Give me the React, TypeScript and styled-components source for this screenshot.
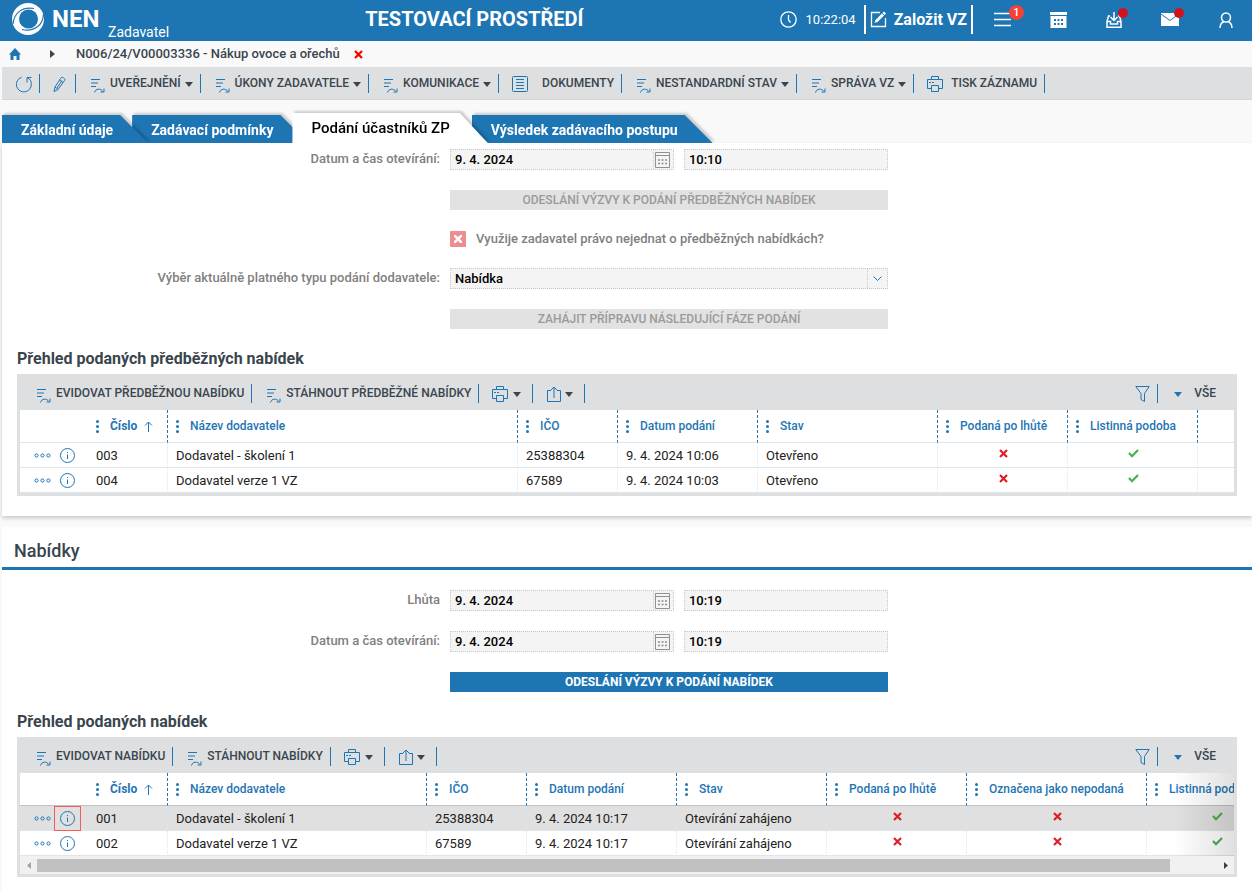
import React from "react";
import styled, { createGlobalStyle } from "styled-components";

const BLUE = "#1e75b4";
const INK = "#3a454d";
const BAR = "#dedfe1";

const GlobalStyle = createGlobalStyle`
  *, *::before, *::after { box-sizing: border-box; }
  body {
    margin: 0;
    background: #f9f9f9;
    color: ${INK};
    font: 13px/20px Roboto, "Liberation Sans", sans-serif;
  }
  button, input, select { font: inherit; color: inherit; margin: 0; border-radius: 0; }
  button { background: none; border: 0; padding: 0; cursor: pointer; }
  a { color: inherit; text-decoration: none; }
  h1, h2, h3, p { margin: 0; }
  svg { display: block; flex: none; }
`;

/* ---------- icons ---------- */

const Line = styled.svg`
  fill: none;
  stroke: ${BLUE};
  stroke-width: 1;
`;

const Logo = () => (
  <svg width="32" height="32" viewBox="0 0 32 32" aria-hidden="true">
    <circle cx="16" cy="16" r="16" fill="#fff" />
    <circle cx="16.500" cy="16" r="9.500" fill={BLUE} />
    <path d="M1 21C2 10 10 3.500 22 5.500M31.500 11C31 22 23 29 10 26.500" fill="none" stroke={BLUE} strokeWidth="1.200" />
  </svg>
);

const FlowSvg = styled(Line)`
  && { margin-top: 5px; }
`;
const FlowIcon = () => (
  <FlowSvg width="14" height="14" viewBox="0 0 14 14" aria-hidden="true">
    <path d="M0 .5H9M0 4H7M0 7.500H5M3.500 13.500C4.500 9.500 9.500 9 12 12.500" />
    <path d="M13 9.500V13H9.500" />
  </FlowSvg>
);

const RefreshIcon = () => (
  <Line width="16" height="17" viewBox="0 0 16 17" aria-hidden="true">
    <path d="M5.500 1.300A7.500 7.500 0 1 0 15.300 7.500" />
    <path d="M15.500 1.500H11V6.500M11 1.500C14 3 15.300 5 15.300 7.500" />
  </Line>
);

const PencilIcon = () => (
  <Line width="15" height="17" viewBox="0 0 15 17" aria-hidden="true">
    <path d="M1 15.500L2 11 8 1.800C9 .3 12.800 2.500 11.500 4.500L5 13.500ZM2 11L5 13.500M6.500 4L10 6.500M9 4.500L4 12" />
  </Line>
);

const DocIcon = () => (
  <Line width="17" height="17" viewBox="0 0 17 17" aria-hidden="true">
    <rect x=".5" y=".5" width="15" height="15" rx="1" />
    <path d="M4 3.500H12M4 6.500H12M4 9.500H12M4 12.500H12" />
  </Line>
);

const PrinterIcon = () => (
  <Line width="17" height="17" viewBox="0 0 17 17" aria-hidden="true">
    <path d="M4.500 3.500V.5H11.500V3.500M4.500 12.500H.5V3.500H15.500V12.500H11.500" />
    <path d="M4.500 9.500H11.500V15.500H4.500ZM2 6.500H4M5 6.500H7" />
  </Line>
);

const ExportIcon = () => (
  <Line width="14" height="17" viewBox="0 0 14 17" aria-hidden="true">
    <path d="M4 4.500H.5V15.500H13.500V4.500H10M7 12V1M3.500 4.500L7 1L10.500 4.500" />
  </Line>
);

const FunnelIcon = () => (
  <Line width="15" height="17" viewBox="0 0 15 17" aria-hidden="true">
    <path d="M.8 .5H14.200L9.500 7.500V15.500L6 13.500V7.500Z" />
  </Line>
);

const CaretSvg = styled.svg<{ $blue?: boolean }>`
  fill: ${(p) => (p.$blue ? BLUE : INK)};
`;
const Caret = ({ blue }: { blue?: boolean }) => (
  <CaretSvg $blue={blue} width="8" height="5" viewBox="0 0 8 5" aria-hidden="true">
    <path d="M0 0H8L4 5Z" />
  </CaretSvg>
);

const HomeIcon = () => (
  <svg width="12" height="12" viewBox="0 0 12 12" fill={BLUE} aria-hidden="true">
    <path d="M6 0L12 6.500H10.500V12H7.500V8H4.500V12H1.500V6.500H0Z" />
  </svg>
);

const Cross = ({ color = "#dd1f26" }: { color?: string }) => (
  <svg width="9" height="9" viewBox="0 0 9 9" stroke={color} strokeWidth="2.200" role="img" aria-label="Ne">
    <path d="M1 1L8 8M8 1L1 8" />
  </svg>
);

const Tick = () => (
  <svg width="11" height="9" viewBox="0 0 11 9" fill="none" stroke="#4cae50" strokeWidth="2.200" role="img" aria-label="Ano">
    <path d="M1 4L4 7.200L10 1" />
  </svg>
);

const DotsIcon = () => (
  <Line width="17" height="5" viewBox="0 0 17 5" aria-hidden="true">
    <circle cx="2.500" cy="2.500" r="1.600" />
    <circle cx="8.500" cy="2.500" r="1.600" />
    <circle cx="14.500" cy="2.500" r="1.600" />
  </Line>
);

const InfoIcon = () => (
  <Line width="15" height="15" viewBox="0 0 15 15" aria-hidden="true">
    <circle cx="7.500" cy="7.500" r="7" />
    <path d="M7.500 6.500V11M7.500 4V5" />
  </Line>
);

const GripIcon = () => (
  <svg width="3" height="13" viewBox="0 0 3 13" fill={BLUE} aria-hidden="true">
    <circle cx="1.500" cy="1.500" r="1.500" />
    <circle cx="1.500" cy="6.500" r="1.500" />
    <circle cx="1.500" cy="11.500" r="1.500" />
  </svg>
);

const SortIcon = () => (
  <Line width="9" height="11" viewBox="0 0 9 11" aria-hidden="true">
    <path d="M4.500 11V1M1 4.500L4.500 1L8 4.500" />
  </Line>
);

const CalendarIcon = () => (
  <svg width="15" height="16" viewBox="0 0 15 16" fill="none" stroke="#8f8f8f" aria-hidden="true">
    <path d="M.5 .5H14.500V15.500H.5ZM.5 3.500H14.500" />
    <path d="M3 8H12M3 11.500H12" strokeWidth="1.500" strokeDasharray="2 1.500" />
  </svg>
);

/* ---------- header ---------- */

const Header = styled.header`
  display: flex;
  align-items: flex-start;
  height: 41px;
  padding: 0 17px 0 12px;
  background: ${BLUE};
  color: #fff;
`;
const Brand = styled.a`
  display: flex;
  align-items: center;
  height: 38px;
`;
const BrandName = styled.span`
  min-width: 56px;
  margin-left: 8px;
  font-size: 24px;
  line-height: 38px;
  font-weight: 700;
`;
const BrandRole = styled.span`
  align-self: flex-end;
  font-size: 14px;
  line-height: 12px;
`;
const EnvName = styled.h1`
  flex: 1;
  font-size: 20px;
  line-height: 38px;
  font-weight: 700;
  text-align: center;
`;
const HeaderTools = styled.div`
  display: flex;
  align-items: center;
  height: 39px;
`;
const Clock = styled.div`
  display: flex;
  align-items: center;
  gap: 9px;
  margin-right: 8px;
`;
const CreateButton = styled.button`
  display: flex;
  align-items: center;
  gap: 7px;
  height: 29px;
  margin-right: 20px;
  padding: 0 4px;
  border: solid #fff;
  border-width: 0 2px;
  font-size: 16px;
  font-weight: 700;
`;
const HeaderIcons = styled.nav`
  display: flex;
  gap: 38px;
`;
const HeaderIcon = styled.button`
  position: relative;
  display: flex;
  align-items: center;
  justify-content: center;
  width: 18px;
  height: 18px;
  svg { fill: none; stroke: #fff; stroke-width: 1.500; }
`;
const Badge = styled.span`
  position: absolute;
  top: -6px;
  right: -13px;
  width: 15px;
  height: 15px;
  border-radius: 50%;
  background: #f44336;
  font-size: 11px;
  line-height: 15px;
  font-weight: 500;
`;
const Dot = styled.span`
  position: absolute;
  top: -3px;
  right: -5px;
  width: 10px;
  height: 10px;
  border-radius: 50%;
  background: #d3131b;
`;

/* ---------- navigation ---------- */

const Crumbs = styled.nav`
  display: flex;
  align-items: center;
  height: 26px;
  padding-left: 9px;
  font-weight: 500;
`;
const CrumbArrow = styled.span`
  width: 0;
  margin: 0 21px 0 29px;
  border: solid transparent;
  border-width: 4px 0 4px 5px;
  border-left-color: ${INK};
`;
const CloseButton = styled.button`
  margin-left: 14px;
`;

const Toolbar = styled.div`
  display: flex;
  align-items: center;
  height: 33px;
  margin-left: 2px;
  background: ${BAR};
  border-bottom: 1px solid #d3d5d7;
`;
const ToolButton = styled.button<{ $gap?: number; $left?: number; $right?: number }>`
  display: flex;
  align-items: center;
  gap: 4px;
  height: 19px;
  padding: 0 ${(p) => p.$right ?? 7}px 0 ${(p) => p.$left ?? 15}px;
  border-right: 1px solid ${BLUE};
  font-size: 12px;
  line-height: 20px;
  font-weight: 500;
  white-space: nowrap;
  > span { margin-left: ${(p) => p.$gap ?? 1}px; }
  > svg { margin-top: 2px; }
`;

const Tabs = styled.div`
  display: flex;
  align-items: flex-end;
  height: 43px;
  padding-left: 2px;
  overflow: hidden;
`;
const Tab = styled.button<{ $active?: boolean; $level: number }>`
  position: relative;
  z-index: ${(p) => p.$level};
  height: ${(p) => (p.$active ? 30 : 28)}px;
  padding: ${(p) => (p.$active ? "0 38px 0 19px" : "2px 35px 0 19px")};
  margin-right: -16px;
  color: ${(p) => (p.$active ? "#000" : "#fff")};
  font-size: ${(p) => (p.$active ? 15 : 14)}px;
  font-weight: ${(p) => (p.$active ? 500 : 700)};
  white-space: nowrap;
  filter: drop-shadow(2px -2px 1px rgba(0, 0, 0, 0.18));
  &::before {
    content: "";
    position: absolute;
    inset: 0;
    z-index: -1;
    background: ${(p) => (p.$active ? "#fff" : BLUE)};
    clip-path: polygon(0 0, calc(100% - 28px) 0, 100% 100%, 0 100%);
  }
`;

/* ---------- form ---------- */

const Panel = styled.section`
  margin-left: 2px;
  background: #fff;
`;
const FirstPanel = styled(Panel)`
  padding: 6px 0 20px;
  margin-bottom: 11px;
  box-shadow: 0 2px 4px rgba(0, 0, 0, 0.2);
`;
const SecondPanel = styled(Panel)`
  padding-bottom: 16px;
`;
const PanelTitle = styled.h2`
  height: 43px;
  margin-bottom: 20px;
  padding: 12px 12px 0;
  border-bottom: 3px solid ${BLUE};
  font-size: 18px;
  line-height: 24px;
  font-weight: 500;
`;
const Form = styled.div`
  display: flex;
  flex-direction: column;
  gap: 20px;
`;
const Row = styled.div`
  display: grid;
  grid-template-columns: 438px minmax(0, 438px);
  column-gap: 10px;
`;
const Label = styled.label`
  color: #808080;
  font-weight: 500;
  line-height: 20px;
  text-align: right;
`;
const Pair = styled.div`
  display: flex;
  gap: 10px;
`;
const Field = styled.div<{ $grow: number }>`
  display: flex;
  flex: ${(p) => p.$grow} 1 0;
  height: 21px;
  border: 1px dotted #c8c8c8;
  background: #f4f4f4;
  color: #000;
`;
const TextInput = styled.input`
  flex: 1;
  min-width: 0;
  padding: 0 4px;
  border: 0;
  background: none;
  font-weight: 500;
`;
const FieldButton = styled.button`
  display: flex;
  align-items: center;
  width: 20px;
  padding-left: 1px;
  border-left: 1px dotted #c8c8c8;
`;
const SelectBox = styled(Field)`
  position: relative;
`;
const Select = styled.select`
  flex: 1;
  appearance: none;
  padding: 0 24px 0 4px;
  border: 0;
  background: none;
  font-weight: 500;
`;
const SelectArrow = styled.span`
  position: absolute;
  inset: 0 0 0 auto;
  display: flex;
  align-items: center;
  justify-content: center;
  width: 20px;
  border-left: 1px dotted #c8c8c8;
  pointer-events: none;
`;
const ActionButton = styled.button<{ $primary?: boolean }>`
  grid-column: 2;
  height: 20px;
  background: ${(p) => (p.$primary ? BLUE : "#e2e2e2")};
  color: ${(p) => (p.$primary ? "#fff" : "#9a9a9a")};
  font-size: 12px;
  font-weight: ${(p) => (p.$primary ? 700 : 500)};
`;
const CheckRow = styled.label`
  grid-column: 2;
  display: flex;
  align-items: center;
  gap: 10px;
  height: 18px;
  color: #808080;
  font-weight: 500;
`;
const CheckWrap = styled.span`
  position: relative;
  width: 16px;
  height: 16px;
  svg { position: absolute; top: 4px; left: 4px; pointer-events: none; }
`;
const CheckBox = styled.input`
  display: block;
  appearance: none;
  margin: 0;
  width: 16px;
  height: 16px;
  border-radius: 1px;
  background: #ee8d90;
`;

/* ---------- grid ---------- */

const GridTitle = styled.h3`
  margin: 18px 15px 3px;
  font-size: 16px;
  line-height: 24px;
  font-weight: 700;
`;
const GridFrame = styled.div`
  margin: 0 15px;
  border: 3px solid ${BAR};
  border-top: 0;
  background: #fff;
`;
const GridBar = styled.div`
  display: flex;
  align-items: center;
  height: 36px;
  padding-top: 2px;
  background: ${BAR};
`;
const Spacer = styled.span`
  flex: 1;
`;
const ViewButton = styled(ToolButton)`
  border: 0;
  gap: 12px;
`;
const Scroller = styled.div`
  position: relative;
  overflow: hidden;
`;
const Fade = styled.div`
  position: absolute;
  inset: 0 0 0 auto;
  width: 60px;
  background: linear-gradient(to right, rgba(0, 0, 0, 0), rgba(0, 0, 0, 0.12));
  pointer-events: none;
`;
const Table = styled.table<{ $width?: number }>`
  width: ${(p) => (p.$width ? `${p.$width}px` : "100%")};
  table-layout: fixed;
  border-collapse: separate;
  border-spacing: 0;
`;
const Col = styled.col<{ $w?: number }>`
  width: ${(p) => (p.$w ? `${p.$w}px` : "auto")};
`;
const Th = styled.th<{ $line?: boolean; $dark?: boolean }>`
  height: 33px;
  padding: 0 0 0 8px;
  border-bottom: 1px solid ${(p) => (p.$dark ? "#bfc1c3" : "#dde6ec")};
  border-right: ${(p) => (p.$line ? `1px dashed ${BLUE}` : "0")};
  color: ${BLUE};
  font-size: 12px;
  font-weight: 500;
  text-align: left;
  white-space: nowrap;
`;
const HeadLabel = styled.span<{ $sorted?: boolean }>`
  display: flex;
  align-items: center;
  gap: 11px;
  font-weight: ${(p) => (p.$sorted ? 700 : 500)};
  svg:last-child:not(:first-child) { margin-left: -4px; }
`;
const Td = styled.td<{ $line?: boolean; $mid?: boolean; $on?: boolean }>`
  height: 25px;
  padding: ${(p) => (p.$mid ? "0 0 0 2px" : "1px 0 0 8px")};
  border-bottom: 1px solid #dde6ec;
  border-right: ${(p) => (p.$line ? "1px dotted #dde6ec" : "0")};
  background: ${(p) => (p.$on ? "#e0e0e0" : "#fff")};
  color: #222;
  line-height: 23px;
  white-space: nowrap;
  > svg { margin: 0 auto 3px; }
`;
const RowTools = styled.span`
  display: flex;
  align-items: center;
  height: 23px;
  padding-left: 6px;
`;
const InfoButton = styled.button<{ $marked?: boolean }>`
  display: flex;
  align-items: center;
  justify-content: center;
  width: 25px;
  height: 23px;
  margin-left: 4px;
  outline: ${(p) => (p.$marked ? "1px solid #f55b5b" : "0")};
`;
const ScrollBar = styled.div`
  display: flex;
  align-items: center;
  height: 18px;
  background: #f1f1f1;
`;
const ScrollTrack = styled.div`
  flex: 1;
`;
const ScrollThumb = styled.div`
  width: 96%;
  height: 13px;
  background: #c1c1c1;
`;
const ScrollArrow = styled.button`
  display: flex;
  align-items: center;
  justify-content: center;
  width: 17px;
  height: 17px;
`;

type Column = { title: string; width?: number; sorted?: boolean };
type Cell = string | boolean;
type GridProps = {
  actions: string[];
  columns: Column[];
  rows: Cell[][];
  width?: number;
  selected?: number;
};

function Grid({ actions, columns, rows, width, selected }: GridProps) {
  return (
    <GridFrame>
      <GridBar>
        {actions.map((a, i) => (
          <ToolButton key={a} $left={i ? 15 : 17}>
            <FlowIcon />
            <span>{a}</span>
          </ToolButton>
        ))}
        <ToolButton $left={13} $right={11} aria-label="Tisk">
          <PrinterIcon />
          <Caret />
        </ToolButton>
        <ToolButton $left={14} $right={11} aria-label="Export">
          <ExportIcon />
          <Caret />
        </ToolButton>
        <Spacer />
        <ToolButton aria-label="Filtr">
          <FunnelIcon />
        </ToolButton>
        <ViewButton $left={16} $right={18}>
          <Caret blue />
          VŠE
        </ViewButton>
      </GridBar>
      <Scroller>
        <Table $width={width}>
          <colgroup>
            <Col $w={68} />
            {columns.map((c) => (
              <Col key={c.title} $w={c.width} />
            ))}
            {!width && <Col />}
          </colgroup>
          <thead>
            <tr>
              <Th $dark={selected === 0} />
              {columns.map((c) => (
                <Th key={c.title} $line $dark={selected === 0} scope="col">
                  <HeadLabel $sorted={c.sorted}>
                    <GripIcon />
                    {c.title}
                    {c.sorted && <SortIcon />}
                  </HeadLabel>
                </Th>
              ))}
              {!width && <Th />}
            </tr>
          </thead>
          <tbody>
            {rows.map((r, i) => (
              <tr key={i}>
                <Td $on={selected === i}>
                  <RowTools>
                    <button aria-label="Akce">
                      <DotsIcon />
                    </button>
                    <InfoButton $marked={selected === i} aria-label="Detail">
                      <InfoIcon />
                    </InfoButton>
                  </RowTools>
                </Td>
                {r.map((v, j) => (
                  <Td key={j} $line $on={selected === i} $mid={typeof v === "boolean"}>
                    {typeof v === "string" ? v : v ? <Tick /> : <Cross />}
                  </Td>
                ))}
                {!width && <Td $on={selected === i} />}
              </tr>
            ))}
          </tbody>
        </Table>
        {width && <Fade />}
      </Scroller>
      {width && (
        <ScrollBar>
          <ScrollArrow aria-label="Posunout vlevo">
            <svg width="4" height="7" viewBox="0 0 4 7" fill="#a3a3a3"><path d="M4 0V7L0 3.500Z" /></svg>
          </ScrollArrow>
          <ScrollTrack>
            <ScrollThumb />
          </ScrollTrack>
          <ScrollArrow aria-label="Posunout vpravo">
            <svg width="4" height="7" viewBox="0 0 4 7" fill="#404040"><path d="M0 0V7L4 3.500Z" /></svg>
          </ScrollArrow>
        </ScrollBar>
      )}
    </GridFrame>
  );
}

function DateRow({ id, label, date, time }: { id: string; label: string; date: string; time: string }) {
  return (
    <Row>
      <Label htmlFor={id}>{label}</Label>
      <Pair>
        <Field $grow={224}>
          <TextInput id={id} defaultValue={date} readOnly />
          <FieldButton aria-label="Kalendář">
            <CalendarIcon />
          </FieldButton>
        </Field>
        <Field $grow={204}>
          <TextInput aria-label={`${label} čas`} defaultValue={time} readOnly />
        </Field>
      </Pair>
    </Row>
  );
}

const Menu = ({ title }: { title: string }) => (
  <ToolButton>
    <FlowIcon />
    <span>{title}</span>
    <Caret />
  </ToolButton>
);

export default function App() {
  return (
    <>
      <GlobalStyle />
      <Header>
        <Brand href="#">
          <Logo />
          <BrandName>NEN</BrandName>
          <BrandRole>Zadavatel</BrandRole>
        </Brand>
        <EnvName>TESTOVACÍ PROSTŘEDÍ</EnvName>
        <HeaderTools>
          <Clock>
            <svg width="17" height="17" viewBox="0 0 17 17" fill="none" stroke="#fff" strokeWidth="1.300" aria-hidden="true">
              <circle cx="8.500" cy="8.500" r="7.700" />
              <path d="M8.500 4V9L10.500 11.500" />
            </svg>
            10:22:04
          </Clock>
          <CreateButton>
            <svg width="17" height="17" viewBox="0 0 17 17" fill="none" stroke="#fff" aria-hidden="true">
              <path d="M10 1.500H1.500V15.500H15.500V7" strokeWidth="1.300" />
              <path d="M6 10.500L13 3.500" strokeWidth="3" />
              <path d="M13.500 3L15 1.500" strokeWidth="3" />
              <path d="M4.500 12L5.500 9.500L7 11Z" fill="#fff" stroke="none" />
            </svg>
            Založit VZ
          </CreateButton>
          <HeaderIcons>
            <HeaderIcon aria-label="Menu">
              <svg width="17" height="15" viewBox="0 0 17 15"><path d="M0 1.500H17M0 7.500H17M0 13.500H17" /></svg>
              <Badge>1</Badge>
            </HeaderIcon>
            <HeaderIcon aria-label="Kalendář">
              <svg width="17" height="16" viewBox="0 0 17 16">
                <path d="M0 1.500H17" strokeWidth="3" />
                <path d="M.5 4H16.500V16H.5Z" fill="#fff" stroke="none" />
                <path d="M4 8H13M4 12H13" stroke={BLUE} strokeWidth="2" strokeDasharray="2 1.500" />
              </svg>
            </HeaderIcon>
            <HeaderIcon aria-label="Doručené">
              <svg width="16" height="16" viewBox="0 0 16 16">
                <path d="M4 4H2.500L1 9.500V15.200H15V9.500L13.500 4H12M1 9.500H4.500V12H11.500V9.500H15M8 0V8M4.500 5L8 8.500L11.500 5" />
              </svg>
              <Dot />
            </HeaderIcon>
            <HeaderIcon aria-label="Zprávy">
              <svg width="18" height="13" viewBox="0 0 18 13">
                <path d="M0 0H18V13H0Z" fill="#fff" stroke="none" />
                <path d="M0 1L9 7.500L18 1" stroke={BLUE} strokeWidth="1" />
              </svg>
              <Dot />
            </HeaderIcon>
            <HeaderIcon aria-label="Uživatel">
              <svg width="14" height="16" viewBox="0 0 14 16">
                <circle cx="7" cy="5.500" r="4.500" />
                <path d="M1 16C1 12.500 2.500 10.500 5 9.500M13 16C13 12.500 11.500 10.500 9 9.500" />
              </svg>
            </HeaderIcon>
          </HeaderIcons>
        </HeaderTools>
      </Header>

      <Crumbs>
        <a href="#" aria-label="Domů">
          <HomeIcon />
        </a>
        <CrumbArrow />
        <a href="#">N006/24/V00003336 - Nákup ovoce a ořechů</a>
        <CloseButton aria-label="Zavřít">
          <Cross color="#f80000" />
        </CloseButton>
      </Crumbs>

      <Toolbar>
        <ToolButton $left={14} aria-label="Obnovit">
          <RefreshIcon />
        </ToolButton>
        <ToolButton $left={13} aria-label="Upravit">
          <PencilIcon />
        </ToolButton>
        <Menu title="UVEŘEJNĚNÍ" />
        <Menu title="ÚKONY ZADAVATELE" />
        <Menu title="KOMUNIKACE" />
        <ToolButton $left={13} $gap={9}>
          <DocIcon />
          <span>DOKUMENTY</span>
        </ToolButton>
        <Menu title="NESTANDARDNÍ STAV" />
        <Menu title="SPRÁVA VZ" />
        <ToolButton $left={13} $gap={3}>
          <PrinterIcon />
          <span>TISK ZÁZNAMU</span>
        </ToolButton>
      </Toolbar>

      <Tabs role="tablist">
        <Tab role="tab" $level={3}>Základní údaje</Tab>
        <Tab role="tab" $level={2}>Zadávací podmínky</Tab>
        <Tab role="tab" $level={4} $active aria-selected>Podání účastníků ZP</Tab>
        <Tab role="tab" $level={1}>Výsledek zadávacího postupu</Tab>
      </Tabs>

      <FirstPanel>
        <Form>
          <DateRow id="open1" label="Datum a čas otevírání:" date="9. 4. 2024" time="10:10" />
          <Row>
            <ActionButton>ODESLÁNÍ VÝZVY K PODÁNÍ PŘEDBĚŽNÝCH NABÍDEK</ActionButton>
          </Row>
          <Row>
            <CheckRow>
              <CheckWrap>
                <CheckBox type="checkbox" />
                <svg width="8" height="8" viewBox="0 0 8 8" stroke="#fff" strokeWidth="2.500">
                  <path d="M0 0L8 8M8 0L0 8" />
                </svg>
              </CheckWrap>
              Využije zadavatel právo nejednat o předběžných nabídkách?
            </CheckRow>
          </Row>
          <Row>
            <Label htmlFor="kind">Výběr aktuálně platného typu podání dodavatele:</Label>
            <SelectBox $grow={1}>
              <Select id="kind">
                <option>Nabídka</option>
              </Select>
              <SelectArrow>
                <Line width="9" height="6" viewBox="0 0 9 6" aria-hidden="true">
                  <path d="M.5 .5L4.500 4.500L8.500 .5" />
                </Line>
              </SelectArrow>
            </SelectBox>
          </Row>
          <Row>
            <ActionButton>ZAHÁJIT PŘÍPRAVU NÁSLEDUJÍCÍ FÁZE PODÁNÍ</ActionButton>
          </Row>
        </Form>
        <GridTitle>Přehled podaných předběžných nabídek</GridTitle>
        <Grid
          actions={["EVIDOVAT PŘEDBĚŽNOU NABÍDKU", "STÁHNOUT PŘEDBĚŽNÉ NABÍDKY"]}
          columns={[
            { title: "Číslo", width: 80, sorted: true },
            { title: "Název dodavatele", width: 350 },
            { title: "IČO", width: 100 },
            { title: "Datum podání", width: 140 },
            { title: "Stav", width: 180 },
            { title: "Podaná po lhůtě", width: 130 },
            { title: "Listinná podoba", width: 130 },
          ]}
          rows={[
            ["003", "Dodavatel - školení 1", "25388304", "9. 4. 2024 10:06", "Otevřeno", false, true],
            ["004", "Dodavatel verze 1 VZ", "67589", "9. 4. 2024 10:03", "Otevřeno", false, true],
          ]}
        />
      </FirstPanel>

      <SecondPanel>
        <PanelTitle>Nabídky</PanelTitle>
        <Form>
          <DateRow id="deadline" label="Lhůta" date="9. 4. 2024" time="10:19" />
          <DateRow id="open2" label="Datum a čas otevírání:" date="9. 4. 2024" time="10:19" />
          <Row>
            <ActionButton $primary>ODESLÁNÍ VÝZVY K PODÁNÍ NABÍDEK</ActionButton>
          </Row>
        </Form>
        <GridTitle>Přehled podaných nabídek</GridTitle>
        <Grid
          width={1267}
          selected={0}
          actions={["EVIDOVAT NABÍDKU", "STÁHNOUT NABÍDKY"]}
          columns={[
            { title: "Číslo", width: 80, sorted: true },
            { title: "Název dodavatele", width: 259 },
            { title: "IČO", width: 100 },
            { title: "Datum podání", width: 150 },
            { title: "Stav", width: 150 },
            { title: "Podaná po lhůtě", width: 140 },
            { title: "Označena jako nepodaná", width: 180 },
            { title: "Listinná podoba", width: 140 },
          ]}
          rows={[
            ["001", "Dodavatel - školení 1", "25388304", "9. 4. 2024 10:17", "Otevírání zahájeno", false, false, true],
            ["002", "Dodavatel verze 1 VZ", "67589", "9. 4. 2024 10:17", "Otevírání zahájeno", false, false, true],
          ]}
        />
      </SecondPanel>
    </>
  );
}
